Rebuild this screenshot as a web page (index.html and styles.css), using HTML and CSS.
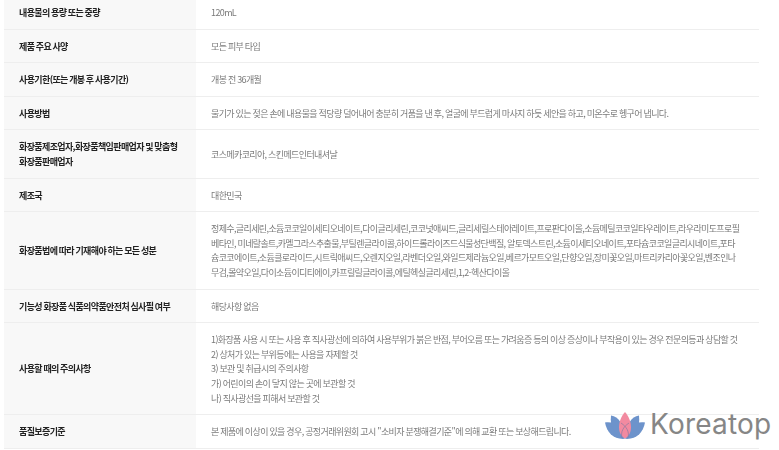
FILE: index.html
```html
<!DOCTYPE html>
<html lang="ko">
<head>
<meta charset="utf-8">
<title>제품 정보</title>
<link rel="stylesheet" href="styles.css">
</head>
<body>
<table class="spec">
<colgroup><col class="col-label"><col></colgroup>
<tbody>
<tr><th>내용물의 용량 또는 중량</th><td>120mL</td></tr>
<tr><th>제품 주요 사양</th><td>모든 피부 타입</td></tr>
<tr><th>사용기한(또는 개봉 후 사용기간)</th><td>개봉 전 36개월</td></tr>
<tr><th>사용방법</th><td>물기가 있는 젖은 손에 내용물을 적당량 덜어내어 충분히 거품을 낸 후, 얼굴에 부드럽게 마사지 하듯 세안을 하고, 미온수로 헹구어 냅니다.</td></tr>
<tr><th>화장품제조업자,화장품책임판매업자 및 맞춤형<br>화장품판매업자</th><td>코스메카코리아, 스킨메드인터내셔날</td></tr>
<tr><th>제조국</th><td>대한민국</td></tr>
<tr><th>화장품법에 따라 기재해야 하는 모든 성분</th><td>정제수,글리세린,소듐코코일이세티오네이트,다이글리세린,코코넛애씨드,글리세릴스테아레이트,프로판다이올,소듐메틸코코일타우레이트,라우라미도프로필<br>베타인, 미네랄솔트,카멜그라스추출물,부틸렌글라이콜,하이드롤라이즈드식물성단백질, 알토덱스트린,소듐이세티오네이트,포타슘코코일글리시네이트,포타<br>슘코코에이트,소듐클로라이드,시트릭애씨드,오렌지오일,라벤더오일,와일드제라늄오일,베르가모트오일,단향오일,장미꽃오일,마트리카리아꽃오일,벤조인나<br>무검,몰약오일,다이소듐이디티에이,카프릴릴글라이콜,에틸헥실글리세린,1,2-헥산다이올</td></tr>
<tr><th>기능성 화장품 식품의약품안전처 심사필 여부</th><td>해당사항 없음</td></tr>
<tr><th>사용할 때의 주의사항</th><td>1)화장품 사용 시 또는 사용 후 직사광선에 의하여 사용부위가 붉은 반점, 부어오름 또는 가려움증 등의 이상 증상이나 부작용이 있는 경우 전문의등과 상담할 것<br>2) 상처가 있는 부위등에는 사용을 자제할 것<br>3) 보관 및 취급시의 주의사항<br>가) 어린이의 손이 닿지 않는 곳에 보관할 것<br>나) 직사광선을 피해서 보관할 것</td></tr>
<tr><th>품질보증기준</th><td>본 제품에 이상이 있을 경우, 공정거래위원회 고시 "소비자 분쟁해결기준"에 의해 교환 또는 보상해드립니다.</td></tr>
</tbody>
</table>
<div class="brand">
<svg class="lotus" viewBox="0 0 40 27" width="40" height="27" aria-hidden="true">
<path class="petal-blue" d="M0 10.500C6 9.500 10 11.500 13 15L20 26.800C9 27.800 2 21 0 10.500Z"/>
<path class="petal-blue" d="M40 10.500C34 9.500 30 11.500 27 15L20 26.800C31 27.800 38 21 40 10.500Z"/>
<path class="petal-blue" d="M6 3.500C10 4 13 6 15 9.500L19 26.500C10 23 4.500 15 6 3.500Z"/>
<path class="petal-blue" d="M34 3.500C30 4 27 6 25 9.500L21 26.500C30 23 35.500 15 34 3.500Z"/>
<path class="petal-pink" d="M20 0C16.500 4 14 9.500 14 15.500C14 20.500 16.500 24.500 20 26.500C23.500 24.500 26 20.500 26 15.500C26 9.500 23.500 4 20 0Z"/>
<path class="petal-line" d="M24 11C18 15 15.500 20 17 26M16 11C22 15 24.500 20 23 26"/>
</svg>
<span class="brand-name">Koreatop</span>
</div>
</body>
</html>
```
FILE: styles.css
```css
* { box-sizing: border-box; }
html, body { margin: 0; padding: 0; background: #fff; }
body {
  width: 779px;
  height: 450px;
  overflow: hidden;
  position: relative;
  padding-left: 4px;
  font-family: "Noto Sans CJK KR", "Noto Sans", sans-serif;
}
.spec {
  width: 755px;
  margin-top: -4px;
  border-collapse: separate;
  border-spacing: 0;
  table-layout: fixed;
  font-size: 9px;
  line-height: 14.6px;
  letter-spacing: -0.62px;
  filter: blur(0.3px);
}
.col-label { width: 192px; }
.spec th, .spec td {
  padding: 10px 15px 8px;
  border-bottom: 1px solid #eeeeee;
  vertical-align: middle;
  text-align: left;
  white-space: nowrap;
}
.spec th { background: #f8f8f8; color: #222; font-weight: 700; word-spacing: -0.5px; }
.spec td { color: #7a7a7a; font-weight: 400; word-spacing: -0.3px; }
.brand {
  position: absolute;
  left: 605px;
  top: 409px;
  display: flex;
  align-items: flex-end;
  gap: 5px;
}
.lotus { display: block; }
.petal-blue { fill: #6d93cb; }
.petal-pink { fill: #f28aa0; }
.petal-line { fill: none; stroke: #8a7aa0; stroke-width: 0.7; }
.brand-name {
  font-family: Inter, "Liberation Sans", sans-serif;
  font-size: 28px;
  font-weight: 400;
  letter-spacing: 0.2px;
  line-height: 30px;
  color: #868686;
}
```
